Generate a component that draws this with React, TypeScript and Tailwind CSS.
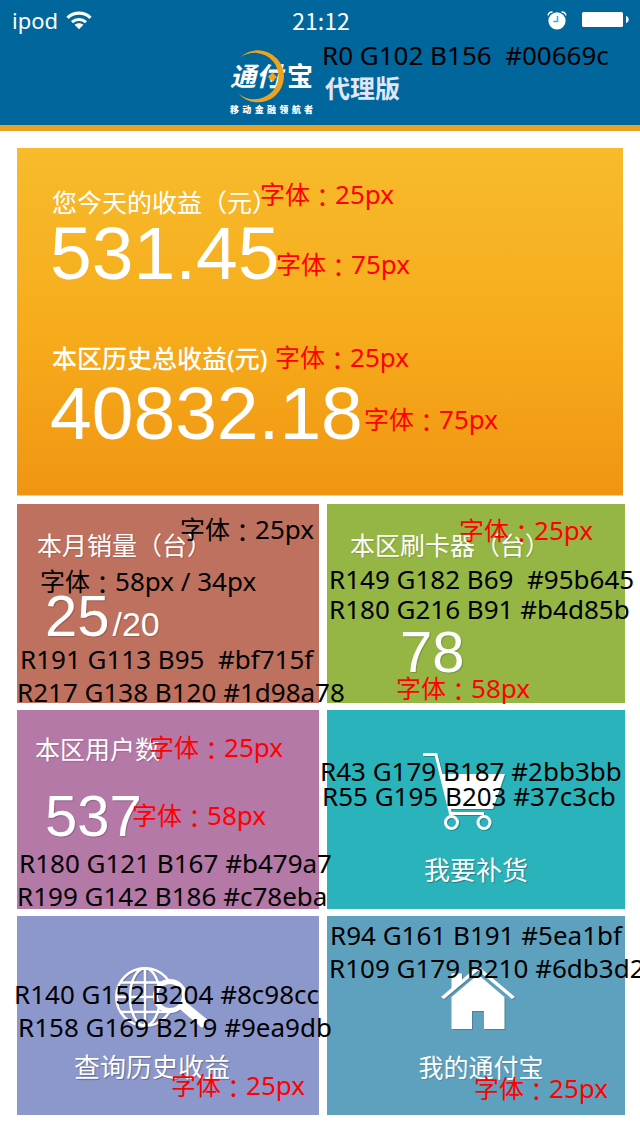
import type { ReactNode } from "react";

const TEXT_FONT = "font-['Noto_Sans','Noto_Sans_CJK_SC',sans-serif]";
const NUMBER_FONT = "font-['Liberation_Sans',Arial,sans-serif]";

/* Design annotation laid over a panel. */
function ColorNote({ children, className }: { children: string; className: string }) {
  return (
    <span className={`pointer-events-none absolute z-10 text-[26px] leading-8 whitespace-pre text-black ${className}`}>
      {children}
    </span>
  );
}

function SizeNote({ size, className }: { size: string; className: string }) {
  return (
    <span className={`pointer-events-none absolute z-10 text-[25px] leading-8 whitespace-pre ${className}`}>
      字体<span className="align-[-3px] font-['Noto_Sans_CJK_TC',sans-serif] leading-none">：</span>
      <span className="text-[26px] leading-none">{size}</span>
    </span>
  );
}

function WifiIcon() {
  return (
    <svg viewBox="0 0 26 19" className="h-[19px] w-[26px]" fill="none" aria-hidden="true">
      <path d="M1.5 6.8C8 .6 18 .6 24.500 6.800" stroke="#fff" strokeWidth="3.200" />
      <path d="M6 11.200C10 7.600 16 7.600 20 11.200" stroke="#fff" strokeWidth="3" />
      <path d="M8.600 13.800C11 11.800 15 11.800 17.400 13.800L13 18.200Z" fill="#fff" />
    </svg>
  );
}

function AlarmIcon() {
  return (
    <svg viewBox="0 0 20 19" className="h-[19px] w-5" fill="none" aria-hidden="true">
      <circle cx="10" cy="9.800" r="8.600" fill="#fff" />
      <path d="M1 4.500C1.500 2.200 3.500 .9 5.500 1M19 4.500C18.500 2.200 16.500 .9 14.500 1" stroke="#fff" strokeWidth="1.300" />
      <path d="M10.500 5V10.500H6.200" stroke="#35b5dc" strokeWidth="1.600" />
    </svg>
  );
}

function BatteryIcon() {
  return (
    <svg viewBox="0 0 48 16" className="h-4 w-12" fill="#fff" aria-hidden="true">
      <rect x="0" y="0" width="41" height="15" rx="1.500" />
      <path d="M44 4C47.600 4.500 47.600 10.500 44 11Z" />
    </svg>
  );
}

function Logo() {
  return (
    <div className="relative flex w-[83px] flex-col text-white">
      <div className="flex h-[53px] items-center justify-between text-[26px] leading-[53px] font-bold">
        <span className="italic">通付</span>
        <span>宝</span>
      </div>
      <div className="flex justify-between text-[9px] leading-[14px] font-black">
        {"移动金融领航者".split("").map((c) => (
          <span key={c}>{c}</span>
        ))}
      </div>
      <svg viewBox="0 0 83 53" className="absolute top-0 left-0 h-[53px] w-[83px]" aria-hidden="true">
        <path d="M10 7.500A26 26 0 1 1 8 43A24 23.200 0 1 0 10 7.500Z" fill="#eda31f" />
        <path d="M42.500 22.500L47 27L42.500 31.500L38 27Z" fill="#f2a324" />
      </svg>
    </div>
  );
}

function CartIcon() {
  return (
    <svg viewBox="0 0 83 79" className="h-[79px] w-[83px] drop-shadow-[1px_1px_0px_rgba(0,0,0,0.25)]" fill="none" aria-hidden="true">
      <path d="M0 1.500H13L27.500 60.500H61" stroke="#fff" strokeWidth="3" />
      <path d="M18 21H82L70 56H26.500Z" fill="#fff" />
      <circle cx="28.500" cy="69.500" r="6" stroke="#fff" strokeWidth="3" />
      <circle cx="61" cy="69.500" r="6" stroke="#fff" strokeWidth="3" />
    </svg>
  );
}

function GlobeSearchIcon() {
  return (
    <svg viewBox="0 0 94 64" className="h-16 w-[94px] drop-shadow-[1px_1px_0px_rgba(0,0,0,0.2)]" fill="none" aria-hidden="true">
      <g stroke="#fff" strokeWidth="2.500">
        <circle cx="30" cy="31" r="28.700" />
        <ellipse cx="30" cy="31" rx="15" ry="28.700" />
        <path d="M30 2.500V59.500M1.500 31H48M5.500 16.500H54M5.500 46H54" />
      </g>
      <circle cx="55" cy="30" r="14.500" fill="#8c98cc" stroke="#fff" strokeWidth="5" />
      <path d="M69 34.500L93.500 54.500L87 62L64 42.500Z" fill="#fff" />
    </svg>
  );
}

function HomeIcon() {
  return (
    <svg viewBox="0 0 74 64" className="h-16 w-[74px] drop-shadow-[1px_1px_0px_rgba(0,0,0,0.2)]" aria-hidden="true">
      <path d="M37 0L74 31L71 33L37 4.500L3 33L0 31L10.500 22V7.500H21V13.500Z" fill="#fff" />
      <path d="M37 8.500L63.500 31V63H43V45H31V63H10.500V31Z" fill="#fff" />
    </svg>
  );
}

function Tile({ className, children }: { className: string; children: ReactNode }) {
  return <section className={`relative min-h-[199px] ${className}`}>{children}</section>;
}

const label = "text-[25px] leading-8 [text-shadow:1px_1px_1px_rgba(0,0,0,0.15)]";
const actionLabel = "text-[26px] leading-8 [text-shadow:1px_1px_1px_rgba(0,0,0,0.3)]";
const figure = `${NUMBER_FONT} text-[58px] leading-[58px] [text-shadow:1px_1px_1px_rgba(0,0,0,0.2)]`;
const total = `${NUMBER_FONT} -ml-[2px] text-[75px] leading-[70px]`;

export default function App() {
  return (
    <div className={`min-h-screen overflow-x-hidden bg-white text-white ${TEXT_FONT}`}>
      <header className="relative border-b-[6px] border-[#eaa221] bg-[#00669c]">
        <div className="grid h-10 grid-cols-3 items-center pr-[10px] pl-3">
          <div className="flex items-center gap-2 text-[22px] leading-10">
            <span>ipod</span>
            <WifiIcon />
          </div>
          <time className="text-center font-['Noto_Sans_CJK_SC',sans-serif] text-[23px] leading-9">21:12</time>
          <div className="flex items-center justify-end gap-[15px]">
            <AlarmIcon />
            <BatteryIcon />
          </div>
        </div>
        <div className="flex h-[85px] items-start justify-center pt-[10px] pr-[10px]">
          <Logo />
          <h1 className="mt-[22px] ml-3 text-[25px] leading-8 font-bold text-[#e0e6f5]">代理版</h1>
        </div>
        <ColorNote className="top-[39px] left-[322px]">{"R0 G102 B156  #00669c"}</ColorNote>
      </header>

      <main className="flex flex-col gap-2 pt-[17px] pr-[15px] pb-5 pl-[17px]">
        <section className="relative mr-[2px] min-h-[348px] border-b border-[#fbc9a0] bg-linear-to-b from-[#f7bb2b] via-[#f6ab1b] via-55% to-[#f09512] pt-[38px] pl-[35px]">
          <h2 className="text-[25px] leading-8">您今天的收益（元）</h2>
          <p className={total}>531.45</p>
          <h2 className="mt-[54px] text-[25px] leading-8 font-medium">本区历史总收益(元)</h2>
          <p className={`mt-1 ${total}`}>40832.18</p>
          <SizeNote size="25px" className="top-[30px] left-[243px] text-[#ff0000]" />
          <SizeNote size="75px" className="top-[100px] left-[259px] text-[#ff0000]" />
          <SizeNote size="25px" className="top-[193px] left-[258px] text-[#ff0000]" />
          <SizeNote size="75px" className="top-[255px] left-[347px] text-[#ff0000]" />
        </section>

        <div className="grid grid-cols-[302fr_298fr] gap-x-2 gap-y-[7px]">
          <Tile className="bg-[#bf715f] pt-[25px] pl-5">
            <h2 className={label}>本月销量（台）</h2>
            <p className={`mt-[26px] ml-2 flex items-baseline gap-[3px] ${figure}`}>
              25<span className="text-[34px] leading-none">/20</span>
            </p>
            <SizeNote size="25px" className="top-[9px] left-[163px] text-black" />
            <SizeNote size="58px / 34px" className="top-[61px] left-[23px] text-black" />
            <ColorNote className="top-[139px] left-[3px]">{"R191 G113 B95  #bf715f"}</ColorNote>
            <ColorNote className="top-[172px] left-0">R217 G138 B120 #1d98a78</ColorNote>
          </Tile>

          <Tile className="bg-[#95b645] pt-[25px] pl-[23px]">
            <h2 className={label}>本区刷卡器（台）</h2>
            <p className={`mt-[62px] ml-[50px] ${figure}`}>78</p>
            <SizeNote size="25px" className="top-[10px] left-[132px] text-[#ff0000]" />
            <ColorNote className="top-[59px] left-[2px]">{"R149 G182 B69  #95b645"}</ColorNote>
            <ColorNote className="top-[89px] left-[2px]">R180 G216 B91 #b4d85b</ColorNote>
            <SizeNote size="58px" className="top-[168px] left-[69px] text-[#ff0000]" />
          </Tile>

          <Tile className="bg-[#b479a7] pt-[23px] pl-[18px]">
            <h2 className={label}>本区用户数</h2>
            <p className={`mt-[22px] ml-[10px] ${figure}`}>537</p>
            <SizeNote size="25px" className="top-[21px] left-[132px] text-[#ff0000]" />
            <SizeNote size="58px" className="top-[89px] left-[115px] text-[#ff0000]" />
            <ColorNote className="top-[137px] left-[2px]">R180 G121 B167 #b479a7</ColorNote>
            <ColorNote className="top-[170px] left-0">R199 G142 B186 #c78eba</ColorNote>
          </Tile>

          <Tile className="bg-[#2bb3bb]">
            <a href="#restock" className="flex h-full flex-col items-center gap-[22px] pt-[43px]">
              <span className="mr-6">
                <CartIcon />
              </span>
              <span className={actionLabel}>我要补货</span>
            </a>
            <ColorNote className="top-[45px] left-[-7px]">R43 G179 B187 #2bb3bb</ColorNote>
            <ColorNote className="top-[70px] left-[-5px]">R55 G195 B203 #37c3cb</ColorNote>
          </Tile>

          <Tile className="bg-[#8c98cc]">
            <a href="#history" className="flex h-full flex-col items-center gap-[21px] pt-[50px] pr-8">
              <span className="ml-5">
                <GlobeSearchIcon />
              </span>
              <span className={actionLabel}>查询历史收益</span>
            </a>
            <ColorNote className="top-[62px] left-[-3px]">R140 G152 B204 #8c98cc</ColorNote>
            <ColorNote className="top-[95px] left-[1px]">R158 G169 B219 #9ea9db</ColorNote>
            <SizeNote size="25px" className="top-[153px] left-[154px] text-[#ff0000]" />
          </Tile>

          <Tile className="bg-[#5ea1bf]">
            <a href="#account" className="flex h-full flex-col items-center gap-[21px] pt-[50px] pl-[10px]">
              <span className="mr-[6px]">
                <HomeIcon />
              </span>
              <span className={label}>我的通付宝</span>
            </a>
            <ColorNote className="top-[3px] left-[3px]">R94 G161 B191 #5ea1bf</ColorNote>
            <ColorNote className="top-[36px] left-[2px]">R109 G179 B210 #6db3d2</ColorNote>
            <SizeNote size="25px" className="top-[156px] left-[147px] text-[#ff0000]" />
          </Tile>
        </div>
      </main>
    </div>
  );
}
